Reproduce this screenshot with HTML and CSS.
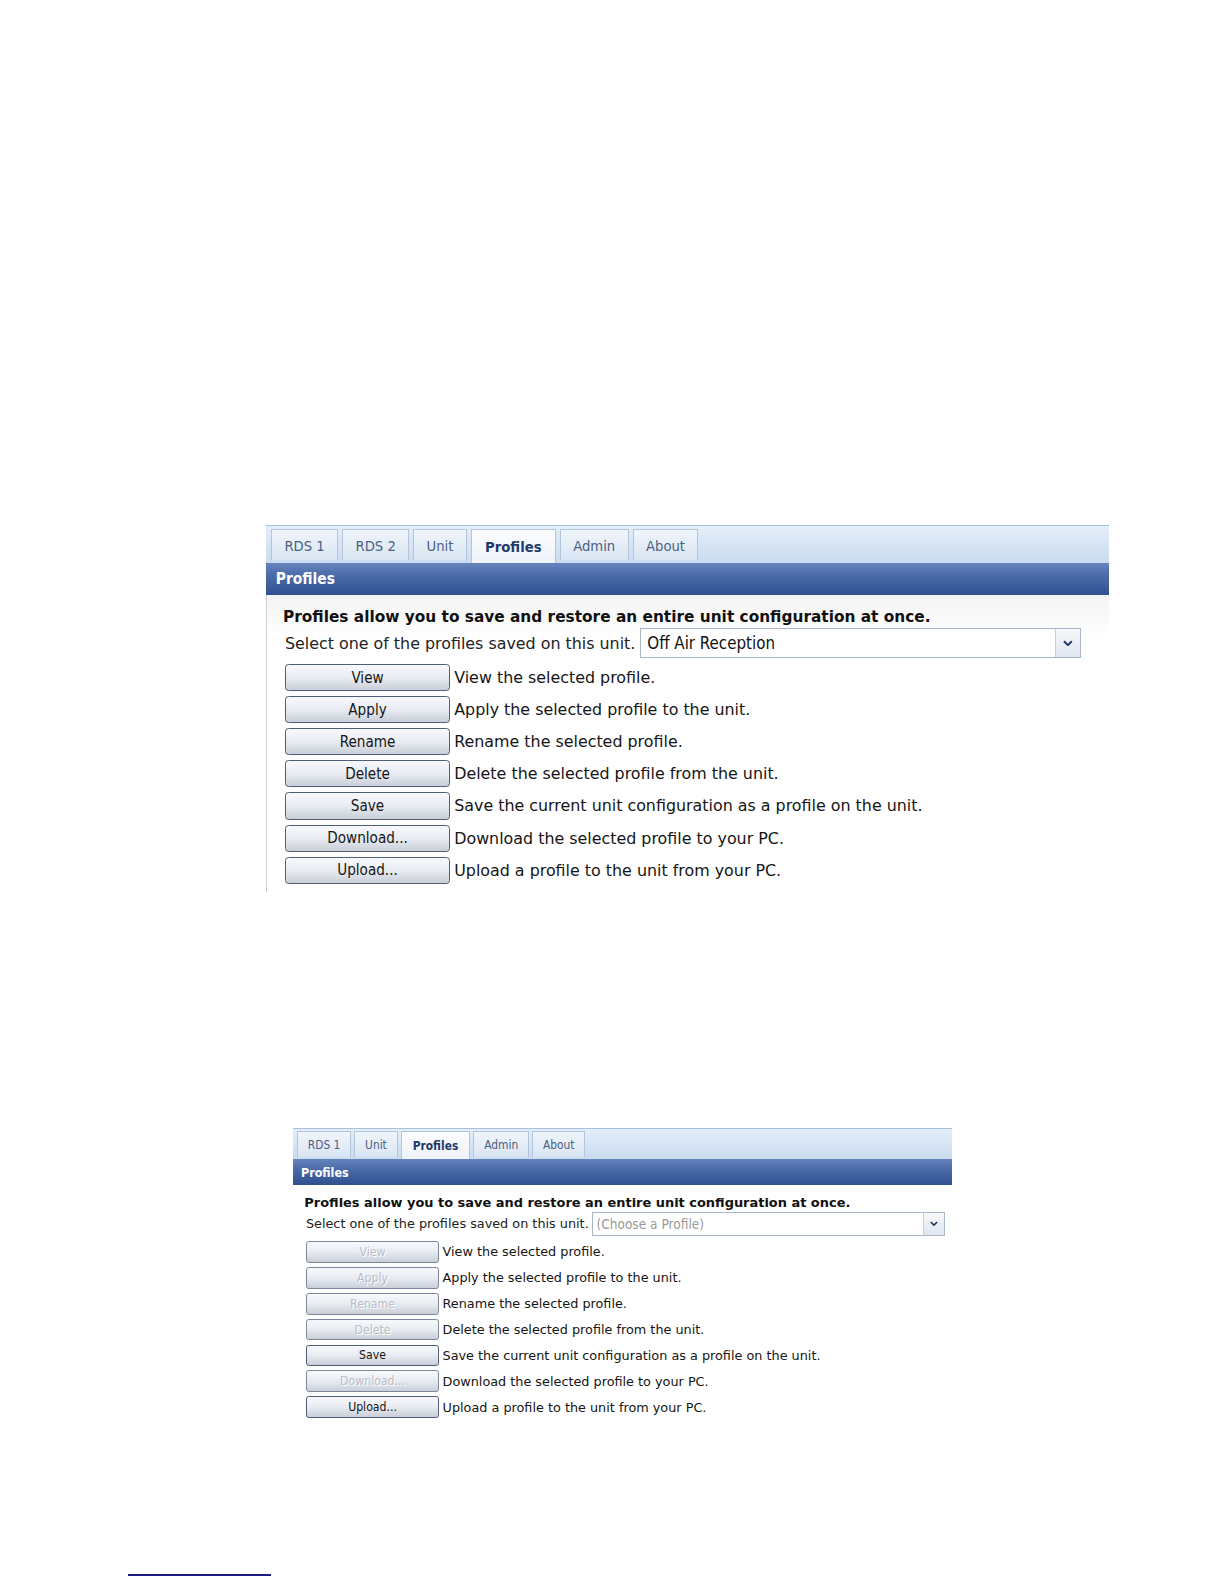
FILE: index.html
```html
<!DOCTYPE html>
<html>
<head>
<meta charset="utf-8">
<title>Profiles</title>
<link rel="stylesheet" href="styles.css">
</head>
<body>
<div class="page">

  <div class="panel large">
    <div class="tabbar">
      <div class="tab">RDS 1</div>
      <div class="tab">RDS 2</div>
      <div class="tab">Unit</div>
      <div class="tab active">Profiles</div>
      <div class="tab">Admin</div>
      <div class="tab">About</div>
    </div>
    <div class="header">Profiles</div>
    <div class="content">
      <div class="intro">Profiles allow you to save and restore an entire unit configuration at once.</div>
      <div class="select-row">
        <span class="label">Select one of the profiles saved on this unit.</span>
        <div class="select">
          <span class="value">Off Air Reception</span>
          <span class="arrow"><svg viewBox="0 0 10 6" class="chev"><polyline points="1,1 5,5 9,1"/></svg></span>
        </div>
      </div>
      <div class="row"><div class="btn">View</div><span class="desc">View the selected profile.</span></div>
      <div class="row"><div class="btn">Apply</div><span class="desc">Apply the selected profile to the unit.</span></div>
      <div class="row"><div class="btn">Rename</div><span class="desc">Rename the selected profile.</span></div>
      <div class="row"><div class="btn">Delete</div><span class="desc">Delete the selected profile from the unit.</span></div>
      <div class="row"><div class="btn">Save</div><span class="desc">Save the current unit configuration as a profile on the unit.</span></div>
      <div class="row"><div class="btn">Download...</div><span class="desc">Download the selected profile to your PC.</span></div>
      <div class="row"><div class="btn">Upload...</div><span class="desc">Upload a profile to the unit from your PC.</span></div>
    </div>
  </div>

  <div class="panel small">
    <div class="tabbar">
      <div class="tab">RDS 1</div>
      <div class="tab">Unit</div>
      <div class="tab active">Profiles</div>
      <div class="tab">Admin</div>
      <div class="tab">About</div>
    </div>
    <div class="header">Profiles</div>
    <div class="content">
      <div class="intro">Profiles allow you to save and restore an entire unit configuration at once.</div>
      <div class="select-row">
        <span class="label">Select one of the profiles saved on this unit.</span>
        <div class="select">
          <span class="value placeholder">(Choose a Profile)</span>
          <span class="arrow"><svg viewBox="0 0 10 6" class="chev"><polyline points="1,1 5,5 9,1"/></svg></span>
        </div>
      </div>
      <div class="row"><div class="btn disabled">View</div><span class="desc">View the selected profile.</span></div>
      <div class="row"><div class="btn disabled">Apply</div><span class="desc">Apply the selected profile to the unit.</span></div>
      <div class="row"><div class="btn disabled">Rename</div><span class="desc">Rename the selected profile.</span></div>
      <div class="row"><div class="btn disabled">Delete</div><span class="desc">Delete the selected profile from the unit.</span></div>
      <div class="row"><div class="btn">Save</div><span class="desc">Save the current unit configuration as a profile on the unit.</span></div>
      <div class="row"><div class="btn disabled">Download...</div><span class="desc">Download the selected profile to your PC.</span></div>
      <div class="row"><div class="btn">Upload...</div><span class="desc">Upload a profile to the unit from your PC.</span></div>
    </div>
  </div>

  <div class="footnote-rule"></div>
</div>
</body>
</html>
```

FILE: styles.css
```css
html, body {
  margin: 0;
  padding: 0;
  background: #ffffff;
}

.page {
  width: 1224px;
  height: 1584px;
  overflow: hidden;
  padding: 525px 0 8px 0;
  box-sizing: border-box;
  display: flex;
  flex-direction: column;
  align-items: flex-start;
  font-family: "DejaVu Sans", Verdana, sans-serif;
  color: #111;
}

.panel {
  display: flex;
  flex-direction: column;
  flex-shrink: 0;
}

.panel.large {
  font-size: 14px;
  width: 843px;
  margin-left: 266px;
}

.panel.small {
  font-size: 11.3px;
  width: 659px;
  margin-left: 293px;
  margin-top: 236px;
}

/* Tab bar */
.tabbar {
  display: flex;
  align-items: flex-end;
  gap: 0.29em;
  padding: 0.21em 0 0.21em 0.36em;
  border-top: 1px solid #a8c1de;
  background: linear-gradient(#e4eef9, #c9dbef);
}

.tab {
  height: 2.14em;
  display: flex;
  align-items: center;
  padding: 0 0.84em;
  box-sizing: border-box;
  border: 1px solid #b3c5db;
  border-bottom: none;
  background: linear-gradient(#f0f5fb, #d9e5f3);
  font-family: "DejaVu Sans Condensed", "DejaVu Sans", sans-serif;
  font-size: 1.05em;
  color: #4b6183;
}

.tab.active {
  background: linear-gradient(#fbfcfe, #eef3f9);
  color: #1e3a6c;
  font-weight: bold;
  padding: 0 0.9em;
  margin-bottom: -0.21em;
  height: 2.35em;
}

.panel.small .tab {
  padding: 0 0.82em;
}

.panel.small .tab.active {
  padding: 0 0.92em;
}

/* Header */
.header {
  height: 2.07em;
  display: flex;
  align-items: center;
  padding-left: 0.64em;
  background: linear-gradient(#6784bd 0%, #4d6dab 35%, #2f4f8f 100%);
  color: #ffffff;
  font-family: "DejaVu Sans Condensed", "DejaVu Sans", sans-serif;
  font-weight: bold;
  font-size: 1.1em;
}

/* Content */
.content {
  display: flex;
  flex-direction: column;
  padding: 0.9em 0 0.6em 1.14em;
}

.panel.large .content {
  border-left: 1px solid #cfcfcf;
  background: linear-gradient(#f3f3f3, #ffffff 3em);
}

.panel.small .content {
  padding-left: 1em;
}

.intro {
  font-weight: bold;
  font-size: 1.097em;
  line-height: 1.186;
  color: #111;
}

.panel.small .intro {
  font-size: 1.146em;
  line-height: 1.17;
}

.select-row {
  display: flex;
  align-items: center;
  gap: 0.3em;
  margin-top: 0.15em;
  padding-left: 0.14em;
}

.label {
  font-size: 1.135em;
  color: #222;
}

.select {
  width: 31.5em;
  height: 2.14em;
  box-sizing: border-box;
  border: 1px solid #a9b6c8;
  display: flex;
  align-items: center;
  justify-content: space-between;
  background: #fff;
}

.panel.small .select {
  width: 31.2em;
}

.value {
  padding-left: 0.4em;
  font-family: "DejaVu Sans Condensed", "DejaVu Sans", sans-serif;
  font-size: 1.2em;
  color: #111;
}

.value.placeholder {
  color: #9a9a9a;
  font-size: 1.2em;
  padding-left: 0.25em;
}

.arrow {
  width: 1.7em;
  align-self: stretch;
  display: flex;
  align-items: center;
  justify-content: center;
  border-left: 1px solid #c4cfdd;
  background: linear-gradient(#f6f8fb, #dfe6ef);
}

.chev {
  width: 0.7em;
  height: 0.45em;
}

.chev polyline {
  fill: none;
  stroke: #1f3560;
  stroke-width: 2;
}

/* Button rows */
.row {
  display: flex;
  align-items: center;
  gap: 0.29em;
  margin-top: 0.36em;
  padding-left: 0.14em;
}

.select-row + .row {
  margin-top: 0.43em;
}

.btn {
  width: 10.93em;
  height: 1.79em;
  box-sizing: border-box;
  display: flex;
  align-items: center;
  justify-content: center;
  border: 1px solid #4f5e78;
  border-radius: 0.23em;
  background: linear-gradient(#f7f9fc 0%, #e8ecf2 50%, #c9ced8 100%);
  font-family: "DejaVu Sans Condensed", "DejaVu Sans", sans-serif;
  font-size: 1.08em;
  color: #161616;
}

.btn.disabled {
  color: #b9bec7;
  text-shadow: 1px 1px 0 #ffffff;
  border-color: #7c8799;
}

.desc {
  font-size: 1.135em;
  color: #151515;
}

/* Footnote rule */
.footnote-rule {
  flex-shrink: 0;
  width: 143px;
  height: 2px;
  background: #1b1b86;
  margin-left: 128px;
  margin-top: auto;
}
```
